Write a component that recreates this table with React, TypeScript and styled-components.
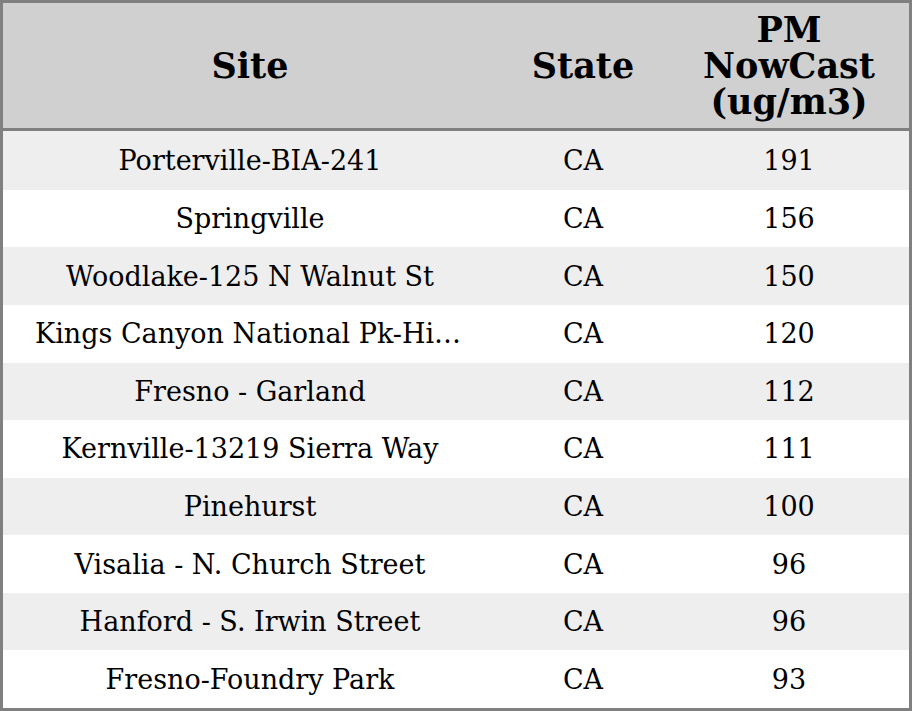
import React from "react";
import styled, { createGlobalStyle } from "styled-components";

const rows = [
  { site: "Porterville-BIA-241", state: "CA", pm: 191 },
  { site: "Springville", state: "CA", pm: 156 },
  { site: "Woodlake-125 N Walnut St", state: "CA", pm: 150 },
  { site: "Kings Canyon National Pk-Hiway 180", state: "CA", pm: 120 },
  { site: "Fresno - Garland", state: "CA", pm: 112 },
  { site: "Kernville-13219 Sierra Way", state: "CA", pm: 111 },
  { site: "Pinehurst", state: "CA", pm: 100 },
  { site: "Visalia - N. Church Street", state: "CA", pm: 96 },
  { site: "Hanford - S. Irwin Street", state: "CA", pm: 96 },
  { site: "Fresno-Foundry Park", state: "CA", pm: 93 },
];

const GlobalStyle = createGlobalStyle`
  html, body {
    margin: 0;
    padding: 0;
    background: #fff;
  }
`;

const App = () => {
  return (
    <>
      <GlobalStyle />
      <Frame>
        <Table>
          <colgroup>
            <col style={{ width: "494px" }} />
            <col style={{ width: "172px" }} />
            <col />
          </colgroup>
          <thead>
            <tr>
              <HeadCell>Site</HeadCell>
              <HeadCell>State</HeadCell>
              <HeadCell>
                PM
                <br />
                NowCast
                <br />
                (ug/m3)
              </HeadCell>
            </tr>
          </thead>
          <tbody>
            {rows.map((row, i) => (
              <Row key={row.site} $striped={i % 2 === 0}>
                <SiteCell>{row.site}</SiteCell>
                <Cell>{row.state}</Cell>
                <Cell>{row.pm}</Cell>
              </Row>
            ))}
          </tbody>
        </Table>
      </Frame>
    </>
  );
};

export default App;

const Frame = styled.div`
  width: 912px;
  height: 711px;
  box-sizing: border-box;
  border: 3px solid #808080;
  overflow: hidden;
  font-family: "DejaVu Serif", "Liberation Serif", serif;
  color: #000;
`;

const Table = styled.table`
  width: 100%;
  height: 100%;
  border-collapse: collapse;
  table-layout: fixed;
`;

const HeadCell = styled.th`
  height: 125px;
  padding: 0;
  background: #d0d0d0;
  border-bottom: 3px solid #808080;
  font-size: 35px;
  font-weight: bold;
  line-height: 36px;
  text-align: center;
  vertical-align: middle;
`;

const Row = styled.tr<{ $striped: boolean }>`
  background: ${(p) => (p.$striped ? "#eeeeee" : "#ffffff")};
`;

const Cell = styled.td`
  padding: 0;
  font-size: 27px;
  text-align: center;
  vertical-align: middle;
  white-space: nowrap;
`;

const SiteCell = styled(Cell)`
  padding: 0 32px;
  overflow: hidden;
  text-overflow: ellipsis;
`;
